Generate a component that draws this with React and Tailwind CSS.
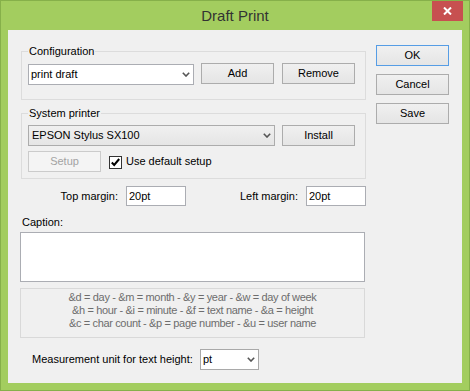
// Draft Print dialog – Windows 8 style
function Chevron() {
    return (
        <svg width="8" height="5" viewBox="0 0 8 5" className="shrink-0">
            <path d="M0.8 0.8 L4 4 L7.2 0.8" fill="none" stroke="#555" strokeWidth="1.6" />
        </svg>
    )
}

function Button({ children, primary, disabled, className = '' }) {
    const border = primary ? 'border-[#569de5]' : disabled ? 'border-[#cbcbcb]' : 'border-[#acacac]'
    const face = disabled ? 'bg-[#f4f4f4] text-[#a3a3a3]' : 'bg-linear-to-b from-[#f0f0f0] to-[#e5e5e5] text-black'
    return (
        <div className={`w-[73px] h-[21px] border ${border} ${face} flex items-center justify-center shrink-0 ${className}`}>
            {children}
        </div>
    )
}

function GroupBox({ label, children, className = '' }) {
    return (
        <div className={`ml-[1px] border border-[#dcdcdc] flex flex-col ${className}`}>
            <span className="-mt-[7px] ml-[6px] px-[1px] bg-[#f0f0f0] self-start">{label}</span>
            {children}
        </div>
    )
}

function TextBox({ value, className = '' }) {
    return (
        <div className={`h-[20px] bg-white border border-[#abadb3] flex items-center pl-[2px] ${className}`}>
            {value}
        </div>
    )
}

export default function App() {
    return (
        <div className="w-[470px] h-[391px] bg-[#a3cd5f] border border-[#86b04a] flex flex-col font-['Liberation_Sans',Arial,sans-serif] text-[11px] leading-[13px] text-black">
            {/* Title bar */}
            <div className="h-[29px] grid grid-cols-[1fr_auto_1fr] items-start">
                <div />
                <div className="text-[15px] leading-[29px] text-[#333]">Draft Print</div>
                <div className="flex justify-end pr-[6px]">
                    <div className="w-[31px] h-[20px] bg-[#c75050] flex items-center justify-center">
                        <svg width="9" height="8" viewBox="0 0 9 8">
                            <path d="M1 0.5 L8 7.5 M8 0.5 L1 7.5" stroke="#fff" strokeWidth="2" />
                        </svg>
                    </div>
                </div>
            </div>

            {/* Client area */}
            <div className="mx-[7px] h-[353px] bg-[#f0f0f0] flex">
                <div className="ml-[12px] w-[346px] flex flex-col">
                    <GroupBox label="Configuration" className="mt-[21px] pb-[14px]">
                        <div className="mt-[5px] pl-[6px] flex items-start">
                            <div className="mt-[1px] w-[166px] h-[21px] bg-white border border-[#abadb3] flex items-center justify-between pl-[2px] pr-[3px]">
                                <span>print draft</span>
                                <Chevron />
                            </div>
                            <Button className="ml-[7px]">Add</Button>
                            <Button className="ml-[8px]">Remove</Button>
                        </div>
                    </GroupBox>

                    <GroupBox label="System printer" className="mt-[13px] pb-[6px]">
                        <div className="mt-[5px] pl-[6px] flex items-start">
                            <div className="w-[247px] h-[21px] bg-linear-to-b from-[#f0f0f0] to-[#e5e5e5] border border-[#acacac] flex items-center justify-between pl-[3px] pr-[3px]">
                                <span>EPSON Stylus SX100</span>
                                <Chevron />
                            </div>
                            <Button className="ml-[7px]">Install</Button>
                        </div>
                        <div className="mt-[5px] pl-[6px] flex items-center">
                            <Button disabled>Setup</Button>
                            <div className="ml-[8px] mt-[1px] w-[13px] h-[13px] bg-white border border-[#333] flex items-center justify-center">
                                <svg width="11" height="11" viewBox="0 0 11 11">
                                    <path d="M1.8 5.5 L4.2 8 L9.2 2" fill="none" stroke="#000" strokeWidth="2" />
                                </svg>
                            </div>
                            <span className="ml-[4px]">Use default setup</span>
                        </div>
                    </GroupBox>

                    <div className="mt-[7px] h-[20px] flex items-center">
                        <span className="w-[98px] text-right">Top margin:</span>
                        <TextBox value="20pt" className="ml-[8px] w-[60px]" />
                        <span className="w-[112px] text-right">Left margin:</span>
                        <TextBox value="20pt" className="ml-[8px] w-[60px]" />
                    </div>

                    <span className="mt-[10px] ml-[2px]">Caption:</span>
                    <div className="mt-[3px] w-[345px] h-[50px] bg-white border border-[#abadb3]" />

                    <div className="mt-[6px] w-[345px] h-[50px] border border-[#d9d9d9] pt-[2px] text-center text-[#6d6d6d] tracking-[-0.35px]">
                        <p>&amp;d = day - &amp;m = month - &amp;y = year - &amp;w = day of week</p>
                        <p>&amp;h = hour - &amp;i = minute - &amp;f = text name - &amp;a = height</p>
                        <p>&amp;c = char count - &amp;p = page number - &amp;u = user name</p>
                    </div>

                    <div className="mt-[11px] flex items-center">
                        <span className="ml-[12px] w-[168px]">Measurement unit for text height:</span>
                        <div className="w-[59px] h-[21px] bg-white border border-[#a9a9a9] flex items-center justify-between pl-[2px] pr-[3px]">
                            <span>pt</span>
                            <Chevron />
                        </div>
                    </div>
                </div>

                <div className="ml-[10px] mt-[15px] flex flex-col gap-[8px]">
                    <Button primary>OK</Button>
                    <Button>Cancel</Button>
                    <Button>Save</Button>
                </div>
            </div>
        </div>
    )
}
